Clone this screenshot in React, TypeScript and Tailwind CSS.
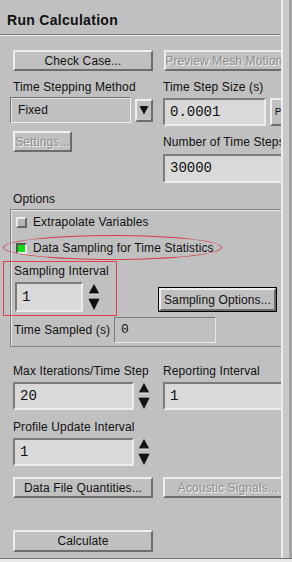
const raised = 'border-2 border-t-[#eeeeee] border-l-[#eeeeee] border-b-[#6c6c6c] border-r-[#6c6c6c] bg-[#c0c0c0]'
const sunken = 'border-2 border-t-[#7c7c7c] border-l-[#7c7c7c] border-b-[#ececec] border-r-[#ececec]'
const mono = "font-['Liberation_Mono','DejaVu_Sans_Mono',monospace] text-[14px] tracking-normal"
const disabled = 'text-[#8e8e8e] [text-shadow:1px_1px_0_#f2f2f2]'

function Button({ label, width, off, height = 'h-[21px]' }: { label: string; width: string; off?: boolean; height?: string }) {
  return (
    <div className={`${raised} ${width} ${height} shrink-0 flex items-center justify-center whitespace-nowrap overflow-hidden ${off ? disabled : ''}`}>
      {label}
    </div>
  )
}

function Field({ value, width, height = 'h-[28px]' }: { value: string; width: string; height?: string }) {
  return (
    <div className={`${sunken} ${width} ${height} shrink-0 bg-[#d9d9d9] flex items-center pl-[5px] ${mono}`}>{value}</div>
  )
}

function Spinner() {
  return (
    <svg width="12" height="28" viewBox="0 0 12 28" className="shrink-0">
      <path d="M6 1 L11.5 11 L0.5 11 Z" fill="#111" />
      <path d="M0.5 11 L11.5 11" stroke="#e8e8e8" strokeWidth="1" />
      <path d="M0.5 16 L11.5 16 L6 27 Z" fill="#111" />
      <path d="M0.5 15.5 L11.5 15.5" stroke="#8a8a8a" strokeWidth="1" />
    </svg>
  )
}

function Label({ text, className = '' }: { text: string; className?: string }) {
  return <div className={`h-[14px] leading-[14px] whitespace-nowrap ${className}`}>{text}</div>
}

export default function App() {
  return (
    <div className="w-[292px] h-[562px] bg-[#c0c0c0] flex flex-col overflow-hidden font-['Liberation_Sans',Arial,sans-serif] text-[12px] tracking-[0.12px] text-[#111]">
      <div className="flex h-[558px]">
        <div className="relative w-[281px] h-full overflow-hidden flex flex-col">
          <div className="h-[34px] pl-[7px] pt-[12px] text-[14px] tracking-[0.3px] font-bold leading-[16px]">Run Calculation</div>
          <div className="w-[280px] border-t border-b border-t-[#7a7a7a] border-b-[#ececec]" />

          <div className="flex gap-[11px] pl-[13px] mt-[14px]">
            <Button label="Check Case..." width="w-[140px]" />
            <Button label="Preview Mesh Motion..." width="w-[130px]" off />
          </div>

          <div className="flex pl-[10px] mt-[9px] gap-[10px]">
            <div className="w-[143px] shrink-0 flex flex-col">
              <Label text="Time Stepping Method" className="pl-[3px]" />
              <div className="flex items-center mt-[3px]">
                <div className="w-[121px] h-[26px] border border-t-[#707070] border-l-[#707070] border-b-[#f0f0f0] border-r-[#f0f0f0] [box-shadow:inset_1px_1px_0_#e4e4e4] flex items-center pl-[7px]">
                  Fixed
                </div>
                <div className={`${raised} ml-[4px] w-[18px] h-[23px] flex items-center justify-center`}>
                  <svg width="10" height="10" viewBox="0 0 10 10">
                    <path d="M0.5 1 L9.5 1 L5 9.5 Z" fill="#111" />
                  </svg>
                </div>
              </div>
              <div className="mt-[8px] pl-[3px]">
                <Button label="Settings..." width="w-[59px]" off />
              </div>
            </div>
            <div className="flex flex-col">
              <Label text="Time Step Size (s)" />
              <div className="flex mt-[4px]">
                <Field value="0.0001" width="w-[103px]" />
                <div className={`${raised} ml-[4px] w-[16px] h-[28px] flex items-center justify-center font-['Liberation_Mono',monospace] text-[11px]`}>P</div>
              </div>
              <Label text="Number of Time Steps" className="mt-[9px]" />
              <div className="mt-[5px]">
                <Field value="30000" width="w-[125px]" height="h-[29px]" />
              </div>
            </div>
          </div>

          <Label text="Options" className="pl-[13px] mt-[9px]" />
          <div className="ml-[10px] mt-[3px] w-[290px] border border-[#848484] [box-shadow:inset_1px_1px_0_#e6e6e6] pt-[5px] pb-[3px] flex flex-col">
            <div className="flex items-center h-[14px] pl-[5px]">
              <div className="w-[11px] h-[11px] border-2 border-t-[#e8e8e8] border-l-[#e8e8e8] border-b-[#666] border-r-[#666] bg-[#b4b4b4]" />
              <span className="ml-[6px]">Extrapolate Variables</span>
            </div>
            <div className="flex items-center h-[14px] pl-[5px] mt-[12px]">
              <div className="w-[11px] h-[11px] border-2 border-t-[#555] border-l-[#555] border-b-[#e8e8e8] border-r-[#e8e8e8] bg-[#10e010]" />
              <span className="ml-[6px]">Data Sampling for Time Statistics</span>
            </div>
            <Label text="Sampling Interval" className="pl-[3px] mt-[9px]" />
            <div className="flex items-end pl-[4px] mt-[4px]">
              <Field value="1" width="w-[68px]" height="h-[30px]" />
              <div className="ml-[5px] mb-[1px]">
                <Spinner />
              </div>
              <div className="ml-[58px] border border-black">
                <Button label="Sampling Options..." width="w-[117px]" height="h-[23px]" />
              </div>
            </div>
            <div className="flex items-center h-[26px] pl-[3px] mt-[5px]">
              <div className="w-[100px] shrink-0">Time Sampled (s)</div>
              <div className="w-[102px] h-[26px] border border-t-[#7c7c7c] border-l-[#7c7c7c] border-b-[#e8e8e8] border-r-[#e8e8e8] flex items-center pl-[6px] font-['Liberation_Mono',monospace] text-[13px]">
                0
              </div>
            </div>
          </div>

          <div className="flex pl-[13px] mt-[17px]">
            <Label text="Max Iterations/Time Step" className="w-[150px]" />
            <Label text="Reporting Interval" />
          </div>
          <div className="flex pl-[13px] mt-[4px]">
            <Field value="20" width="w-[121px]" />
            <div className="ml-[4px]">
              <Spinner />
            </div>
            <div className="ml-[13px]">
              <Field value="1" width="w-[130px]" />
            </div>
          </div>
          <Label text="Profile Update Interval" className="pl-[13px] mt-[10px]" />
          <div className="flex pl-[13px] mt-[4px]">
            <Field value="1" width="w-[121px]" />
            <div className="ml-[4px]">
              <Spinner />
            </div>
          </div>

          <div className="flex gap-[10px] pl-[13px] mt-[11px]">
            <Button label="Data File Quantities..." width="w-[140px]" />
            <Button label="Acoustic Signals..." width="w-[130px]" off />
          </div>
          <div className="pl-[13px] mt-[32px]">
            <Button label="Calculate" width="w-[140px]" height="h-[22px]" />
          </div>

          <div className="absolute left-[3px] top-[235px] w-[219px] h-[25px] border border-[#d2404e] rounded-[50%]" />
          <div className="absolute left-[3px] top-[261px] w-[114px] h-[55px] border border-[#e0404e]" />
        </div>
        <div className="w-[2px] bg-[#ececec]" />
        <div className="w-[6px] bg-[#c9c9c9]" />
        <div className="w-[3px] bg-[#a4a4a4]" />
      </div>
      <div className="h-[1px] bg-[#707070]" />
      <div className="h-[3px] bg-[#e8e8e8]" />
    </div>
  )
}
